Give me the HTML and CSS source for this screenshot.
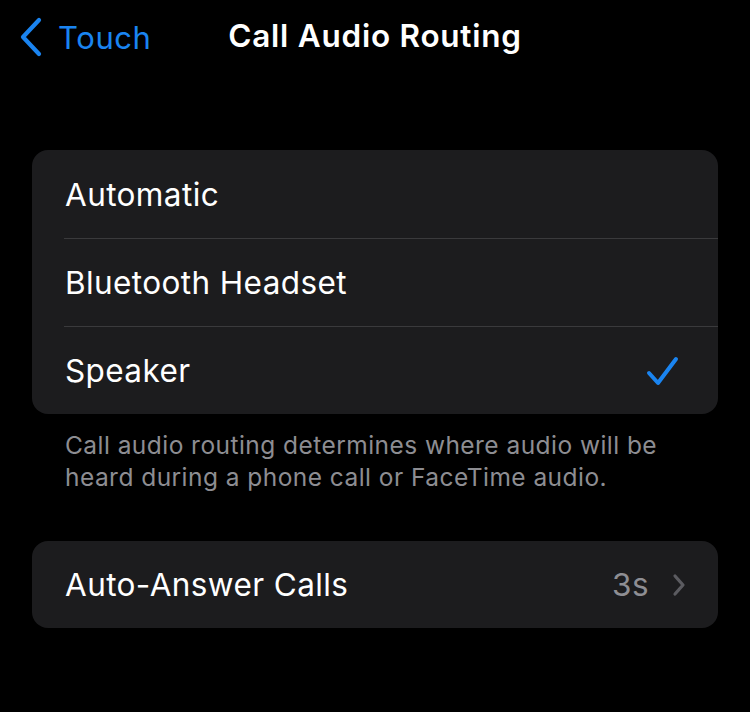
FILE: index.html
```html
<!DOCTYPE html>
<html lang="en">
<head>
<meta charset="utf-8">
<title>Call Audio Routing</title>
<link rel="stylesheet" href="styles.css">
</head>
<body>
<div class="screen">
  <header class="nav">
    <a class="back" href="#">
      <svg class="back-chevron" width="26" height="40" viewBox="0 0 26 40"><path d="M21 3 L5 20 L21 37" fill="none" stroke="#1a84f0" stroke-width="4.2" stroke-linecap="round" stroke-linejoin="round"/></svg>
      <span class="back-label">Touch</span>
    </a>
    <h1 class="title">Call Audio Routing</h1>
  </header>

  <section class="group group-first">
    <div class="row"><span class="row-label">Automatic</span></div>
    <div class="row"><span class="row-label">Bluetooth Headset</span></div>
    <div class="row">
      <span class="row-label">Speaker</span>
      <svg class="check" width="34" height="32" viewBox="0 0 34 32"><path d="M3 18 L12 28 L30 4" fill="none" stroke="#1a84f0" stroke-width="4" stroke-linecap="round" stroke-linejoin="round"/></svg>
    </div>
  </section>
  <p class="footnote">Call audio routing determines where audio will be heard during a phone call or FaceTime audio.</p>

  <section class="group group-last">
    <div class="row">
      <span class="row-label">Auto-Answer Calls</span>
      <span class="row-value">3s</span>
      <svg class="disclosure" width="14" height="24" viewBox="0 0 14 24"><path d="M3 3 L11 12 L3 21" fill="none" stroke="#5b5b60" stroke-width="3.2" stroke-linecap="round" stroke-linejoin="round"/></svg>
    </div>
  </section>
</div>
</body>
</html>
```

FILE: styles.css
```css
html, body {
  margin: 0;
  padding: 0;
  background: #000;
}
body {
  font-family: Inter, "Noto Sans", "Liberation Sans", sans-serif;
  color: #fff;
  width: 750px;
  height: 712px;
  overflow: hidden;
}
.screen {
  padding: 0 32px;
}
.nav {
  position: relative;
  height: 75px;
  display: flex;
  align-items: center;
  justify-content: center;
}
.back {
  position: absolute;
  left: -14px;
  top: 17px;
  display: flex;
  align-items: center;
  gap: 14px;
  text-decoration: none;
  color: #1a84f0;
}
.back-label {
  font-size: 31px;
  letter-spacing: 0.6px;
}
.title {
  margin: 0;
  font-size: 31.5px;
  font-weight: 600;
  letter-spacing: 0.75px;
  padding-bottom: 4px;
}
.group {
  background: #1c1c1e;
  border-radius: 16px;
  overflow: hidden;
}
.group-first {
  margin-top: 75px;
}
.row {
  height: 88px;
  display: flex;
  align-items: center;
  padding: 0 32px 0 33px;
  position: relative;
}
.row + .row::before {
  content: "";
  position: absolute;
  left: 32px;
  right: 0;
  top: 0;
  height: 1px;
  background: #3a3a3c;
}
.row-label {
  flex: 1;
  font-size: 31.5px;
  letter-spacing: 0.4px;
}
.check {
  margin-right: 6px;
  margin-top: 2px;
}
.row-value {
  font-size: 31.5px;
  color: #8e8e93;
  margin-right: 23px;
  letter-spacing: 0.4px;
}
.footnote {
  margin: 15px 0 48px 33px;
  padding-right: 30px;
  font-size: 24.5px;
  line-height: 32px;
  color: #8d8d92;
  letter-spacing: 0.45px;
}
.group-last .row {
  height: 87px;
}
```
